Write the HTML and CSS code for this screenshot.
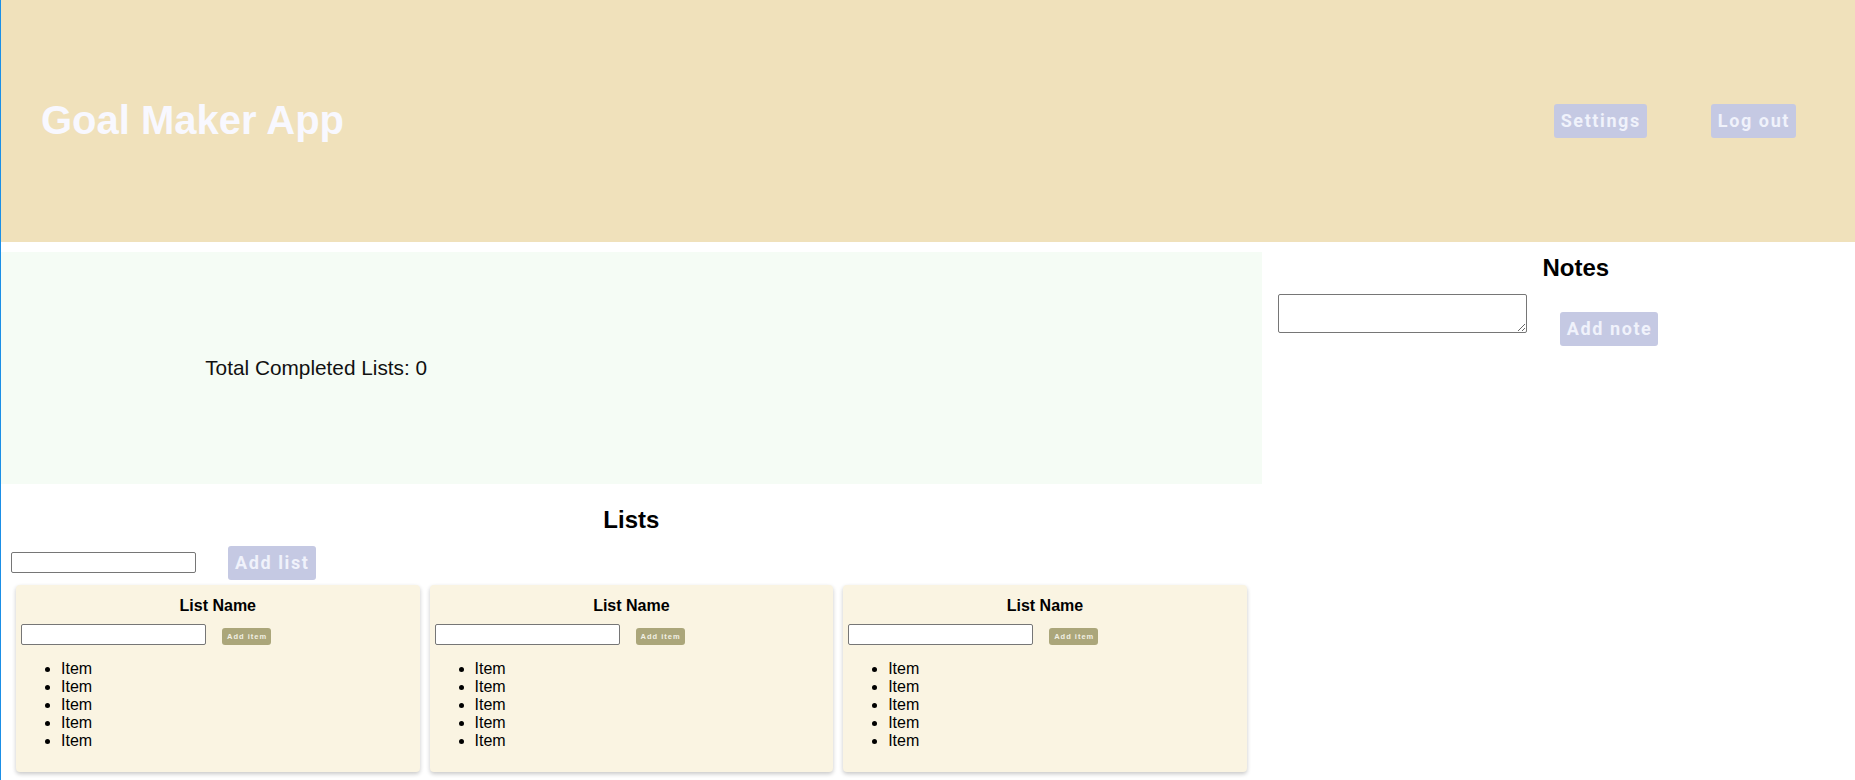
FILE: index.html
```html
<!DOCTYPE html>
<html lang="en">
<head>
<meta charset="utf-8">
<title>Goal Maker App</title>
<link rel="stylesheet" href="styles.css">
</head>
<body>
<div class="page">
  <header class="header">
    <h1 class="title">Goal Maker App</h1>
    <nav class="header-actions">
      <button class="btn">Settings</button>
      <button class="btn">Log out</button>
    </nav>
  </header>
  <main class="main">
    <section class="left">
      <div class="stats">
        <div class="stats-half"><p class="stats-text">Total Completed Lists: 0</p></div>
        <div class="stats-half"></div>
      </div>
      <h2 class="section-title lists-title">Lists</h2>
      <div class="add-row">
        <input class="text-input" type="text">
        <button class="btn add-list-btn">Add list</button>
      </div>
      <div class="cards">
        <div class="card">
          <h3 class="card-title">List Name</h3>
          <div class="card-row">
            <input class="text-input" type="text">
            <button class="btn-small">Add item</button>
          </div>
          <ul class="items">
            <li>Item</li><li>Item</li><li>Item</li><li>Item</li><li>Item</li>
          </ul>
        </div>
        <div class="card">
          <h3 class="card-title">List Name</h3>
          <div class="card-row">
            <input class="text-input" type="text">
            <button class="btn-small">Add item</button>
          </div>
          <ul class="items">
            <li>Item</li><li>Item</li><li>Item</li><li>Item</li><li>Item</li>
          </ul>
        </div>
        <div class="card">
          <h3 class="card-title">List Name</h3>
          <div class="card-row">
            <input class="text-input" type="text">
            <button class="btn-small">Add item</button>
          </div>
          <ul class="items">
            <li>Item</li><li>Item</li><li>Item</li><li>Item</li><li>Item</li>
          </ul>
        </div>
      </div>
    </section>
    <aside class="right">
      <h2 class="section-title notes-title">Notes</h2>
      <div class="notes-row">
        <textarea class="note-input"></textarea>
        <button class="btn add-note-btn">Add note</button>
      </div>
    </aside>
  </main>
</div>
</body>
</html>
```

FILE: styles.css
```css
html, body {
  margin: 0;
  padding: 0;
  background: #ffffff;
}

body {
  font-family: "Liberation Sans", Arial, sans-serif;
  color: #000;
}

.page {
  border-left: 1px solid #1b8fe6;
  min-height: 100vh;
  box-sizing: border-box;
}

.header {
  height: 242px;
  background: #f0e1bb;
  display: flex;
  align-items: center;
  justify-content: space-between;
  padding: 0 59px 0 40px;
  box-sizing: border-box;
}

.title {
  margin: 0;
  font-size: 40px;
  font-weight: bold;
  color: #f8f8ff;
  line-height: 46px;
  position: relative;
  top: -1px;
}

.header-actions {
  display: flex;
  align-items: center;
  gap: 64px;
}

.btn {
  font-family: Roboto, "Liberation Sans", sans-serif;
  font-weight: bold;
  font-size: 18px;
  letter-spacing: 1.6px;
  line-height: 22px;
  padding: 6px 6px 6px 7px;
  background: #c5c9e3;
  color: #f0f2fb;
  border: none;
  border-radius: 3px;
  margin: 0;
}

.main {
  display: grid;
  grid-template-columns: 68% 1fr;
  margin-top: 10px;
}

.stats {
  height: 232px;
  background: #f5fcf5;
  display: flex;
}

.stats-half {
  flex: 1;
  display: flex;
  align-items: center;
  justify-content: center;
}

.stats-text {
  margin: 0;
  font-size: 20.8px;
  line-height: 24px;
  color: #111;
}

.section-title {
  font-size: 24px;
  font-weight: bold;
  text-align: center;
  line-height: 27.6px;
}

.lists-title {
  margin: 22px 0 12px;
}

.add-row {
  display: flex;
  align-items: center;
  gap: 32px;
  padding-left: 10px;
}

.text-input {
  width: 185px;
  height: 21px;
  box-sizing: border-box;
  border: 1px solid #767676;
  border-radius: 2px;
  background: #fff;
  margin: 0;
  padding: 1px 2px;
}

.cards {
  display: flex;
  padding: 0 10px;
}

.card {
  flex: 1;
  margin: 5px;
  padding: 5px;
  background: #faf4e2;
  border-radius: 4px;
  box-shadow: 0 2px 4px rgba(0, 0, 0, 0.22);
}

.card-title {
  margin: 7px 0 9px;
  font-size: 16px;
  line-height: 18px;
  font-weight: bold;
  text-align: center;
}

.card-row {
  display: flex;
  align-items: flex-end;
  gap: 16px;
}

.btn-small {
  font-family: "Liberation Sans", Arial, sans-serif;
  font-weight: bold;
  font-size: 7.5px;
  letter-spacing: 1px;
  line-height: 9px;
  padding: 4px 4px 4px 5px;
  background: #aba67a;
  color: #f2f0e4;
  border: none;
  border-radius: 3px;
  margin: 0;
}

.items {
  margin: 15px 0 17px;
  padding-left: 40px;
  font-size: 16px;
  line-height: 18px;
}

.right {
  padding-left: 16px;
}

.notes-title {
  margin: 2px 0 12px;
  padding-left: 19px;
}

.notes-row {
  display: flex;
  align-items: flex-start;
  gap: 33px;
}

.note-input {
  width: 249px;
  height: 39px;
  box-sizing: border-box;
  border: 1px solid #767676;
  border-radius: 2px;
  margin: 0;
  padding: 2px;
  resize: both;
}

.add-note-btn {
  margin-top: 18px;
}
```
